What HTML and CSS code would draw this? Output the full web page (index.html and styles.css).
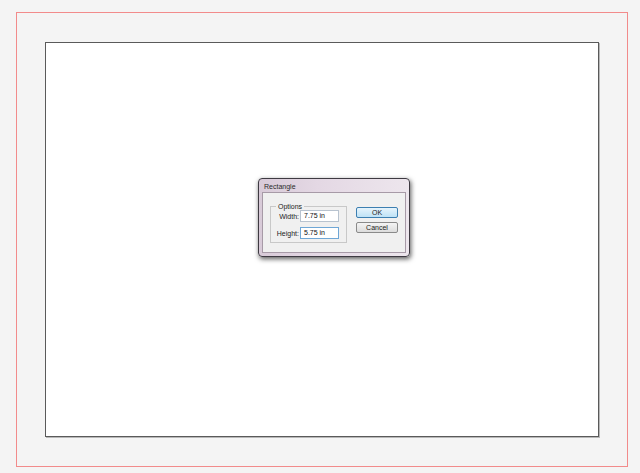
FILE: index.html
```html
<!DOCTYPE html>
<html lang="en">
<head>
    <meta charset="UTF-8">
    <title>Rectangle</title>
    <link rel="stylesheet" href="styles.css">
</head>
<body>
    <div class="bleed">
        <div class="artboard">
            <div class="dialog">
                <div class="title">Rectangle</div>
                <div class="client">
                    <fieldset class="options">
                        <legend>Options</legend>
                        <div class="row">
                            <label>Width:</label>
                            <span class="field">7.75 in</span>
                        </div>
                        <div class="row">
                            <label>Height:</label>
                            <span class="field focus">5.75 in</span>
                        </div>
                    </fieldset>
                    <div class="buttons">
                        <span class="btn default">OK</span>
                        <span class="btn">Cancel</span>
                    </div>
                </div>
            </div>
        </div>
    </div>
</body>
</html>
```
FILE: styles.css
```css
html, body {
    margin: 0;
    height: 100%;
    background-color: #f4f4f4;
    font-family: "Liberation Sans", Arial, sans-serif;
}
.bleed {
    box-sizing: border-box;
    position: relative;
    top: 12px;
    margin-left: 16px;
    width: 612px;
    height: 455px;
    border: 1px solid #f28b8b;
    padding: 29px 0 0 28px;
}
.artboard {
    box-sizing: border-box;
    width: 554px;
    height: 395px;
    background-color: #ffffff;
    border: 1px solid #5a5a5a;
    box-shadow: 1px 1px 0 #b8b8b8;
    padding: 135px 0 0 212px;
}
.dialog {
    box-sizing: border-box;
    width: 152px;
    height: 79px;
    border: 1px solid #3e3a42;
    border-radius: 4px;
    background: linear-gradient(90deg, #d8cad8 0%, #e4d8e4 40%, #ede6ed 100%);
    box-shadow: 1px 2px 5px rgba(0, 0, 0, 0.65);
    padding: 0 3px 3px 3px;
    display: flex;
    flex-direction: column;
}
.title {
    font-size: 7px;
    color: #2a2a2a;
    height: 13px;
    line-height: 15px;
    padding-left: 2px;
}
.client {
    flex: 1;
    background-color: #f0f0f0;
    border: 1px solid #a79aa7;
    display: flex;
    padding: 10px 0 0 7px;
}
.options {
    box-sizing: border-box;
    margin: 0;
    width: 77px;
    height: 40px;
    border: 1px solid #c8c8c8;
    padding: 0 0 0 3px;
    font-size: 7px;
    color: #222;
}
.options legend {
    padding: 0 2px;
    margin-left: 2px;
    font-size: 7px;
}
.row {
    display: flex;
    align-items: center;
    margin-top: 1px;
    margin-bottom: 5px;
}
.row:first-of-type {
    margin-top: 0;
}
.row label {
    width: 25px;
    text-align: right;
    padding-right: 1px;
}
.field {
    box-sizing: border-box;
    width: 39px;
    height: 12px;
    line-height: 10px;
    border: 1px solid #b8c3cf;
    background-color: #fff;
    padding-left: 3px;
    color: #111;
}
.field.focus {
    border-color: #6fa7d6;
}
.buttons {
    display: flex;
    flex-direction: column;
    gap: 4px;
    margin-left: 9px;
    margin-top: 4px;
}
.btn {
    box-sizing: border-box;
    width: 42px;
    height: 11px;
    line-height: 9px;
    text-align: center;
    font-size: 7px;
    color: #222;
    border: 1px solid #8a8a8a;
    border-radius: 2px;
    background: linear-gradient(#f4f4f4, #dcdcdc);
}
.btn.default {
    border-color: #3c7fb1;
    background: linear-gradient(#e6f4fc, #bfe2f6);
}
```
